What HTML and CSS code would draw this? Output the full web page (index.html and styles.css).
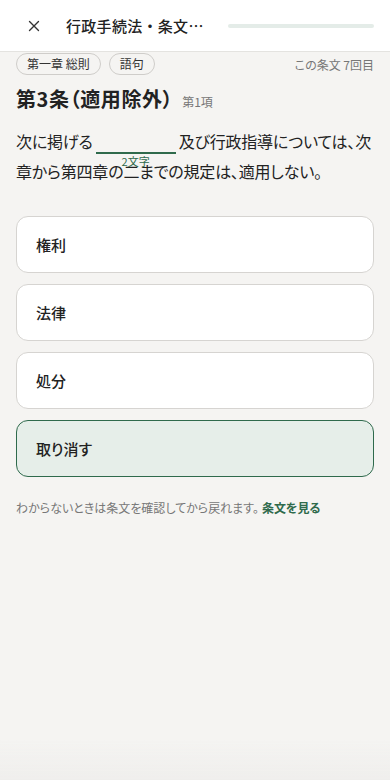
FILE: index.html
```html
<html>
  <head>
    <meta charset="utf-8">
    <title>行政手続法・条文</title>
    <link rel="stylesheet" href="styles.css">
  </head>
  <body>
    <header class="topbar">
      <button class="close" aria-label="閉じる">
        <svg viewBox="0 0 24 24" width="18" height="18" fill="none" stroke="#333" stroke-width="1.8" stroke-linecap="round">
          <path d="M6 6l12 12M18 6L6 18" />
        </svg>
      </button>
      <h1 class="title">行政手続法・条文…</h1>
      <div class="progress"><span class="fill"></span></div>
    </header>

    <main class="content">
      <div class="meta">
        <span class="pill">第一章 総則</span>
        <span class="pill">語句</span>
        <span class="count">この条文 7回目</span>
      </div>

      <h2 class="article">第3条（適用除外）<small>第1項</small></h2>

      <p class="text">次に掲げる<span class="blank"><span class="hint">2文字</span></span>及び行政指導については、次章から第四章の二までの規定は、適用しない。</p>

      <!-- answer choices -->
      <div class="choices">
        <button class="choice">権利</button>
        <button class="choice">法律</button>
        <button class="choice">処分</button>
        <button class="choice selected">取り消す</button>
      </div>

      <p class="note">わからないときは条文を確認してから戻れます。<a href="#">条文を見る</a></p>
    </main>
    <div class="fade"></div>
  </body>
</html>
```

FILE: styles.css
```css
body {
  margin: 0;
  padding: 0;
  background-color: #f5f4f2;
  font-family: "Noto Sans CJK JP", "Noto Sans", sans-serif;
  font-feature-settings: "palt";
  color: #222;
  width: 390px;
  height: 780px;
  overflow: hidden;
}
.topbar {
  height: 52px;
  box-sizing: border-box;
  background: #fff;
  border-bottom: 1px solid #e4e3e0;
  display: flex;
  align-items: center;
  padding: 0 16px 0 22px;
}
.close {
  border: 0;
  background: none;
  padding: 0;
  width: 24px;
  height: 24px;
  display: flex;
  align-items: center;
  justify-content: center;
}
.title {
  margin: 0 0 0 20px;
  font-size: 15px;
  font-weight: 500;
  font-feature-settings: normal;
  color: #222;
  width: 140px;
  white-space: nowrap;
  letter-spacing: 0.3px;
}
.progress {
  flex: 1;
  margin-left: 22px;
  height: 4px;
  border-radius: 2px;
  background: #e4ece8;
}
.fill { display: block; width: 0; height: 100%; }

.content {
  padding: 0 16px;
}
.meta {
  display: flex;
  align-items: center;
  gap: 8px;
  height: 24px;
}
.pill {
  font-size: 12px;
  line-height: 20px;
  padding: 0 10px;
  border: 1px solid #cfcdca;
  border-radius: 11px;
  color: #333;
}
.count {
  margin-left: auto;
  font-size: 12px;
  color: #777;
}
.article {
  margin: 9px 0 0;
  font-size: 20px;
  font-weight: 700;
  line-height: 28px;
  letter-spacing: 0.6px;
}
.article small {
  font-size: 12px;
  font-weight: 400;
  color: #777;
  margin-left: 9px;
  letter-spacing: 0;
}
.text {
  margin: 10px 0 0;
  font-size: 16px;
  line-height: 30px;
  letter-spacing: -0.2px;
  color: #222;
}
.blank {
  display: inline-block;
  position: relative;
  width: 80px;
  height: 20px;
  margin: 0 3px;
  border-bottom: 2px solid #2f6a4c;
  vertical-align: -6px;
}
.hint {
  position: absolute;
  top: 23px;
  left: 0;
  right: 0;
  text-align: center;
  font-size: 11px;
  line-height: 12px;
  letter-spacing: 0;
  color: #2f6a4c;
}
.choices {
  margin-top: 30px;
  display: flex;
  flex-direction: column;
  gap: 11px;
}
.choice {
  height: 57px;
  box-sizing: border-box;
  text-align: left;
  padding: 0 19px;
  background: #fff;
  border: 1px solid #d6d4d1;
  border-radius: 12px;
  font-family: inherit;
  font-feature-settings: "palt";
  font-size: 15px;
  font-weight: 500;
  color: #222;
}
.choice.selected {
  background: #e6eee9;
  border-color: #2f6a4c;
}
.note {
  margin: 22px 0 0;
  font-size: 12px;
  color: #777;
}
.note a {
  margin-left: 3px;
  color: #2f6a4c;
  font-weight: 700;
  text-decoration: none;
}
.fade {
  position: fixed;
  left: 0;
  right: 0;
  bottom: 0;
  height: 40px;
  background: linear-gradient(#f5f4f200, #efeeec);
}
```
